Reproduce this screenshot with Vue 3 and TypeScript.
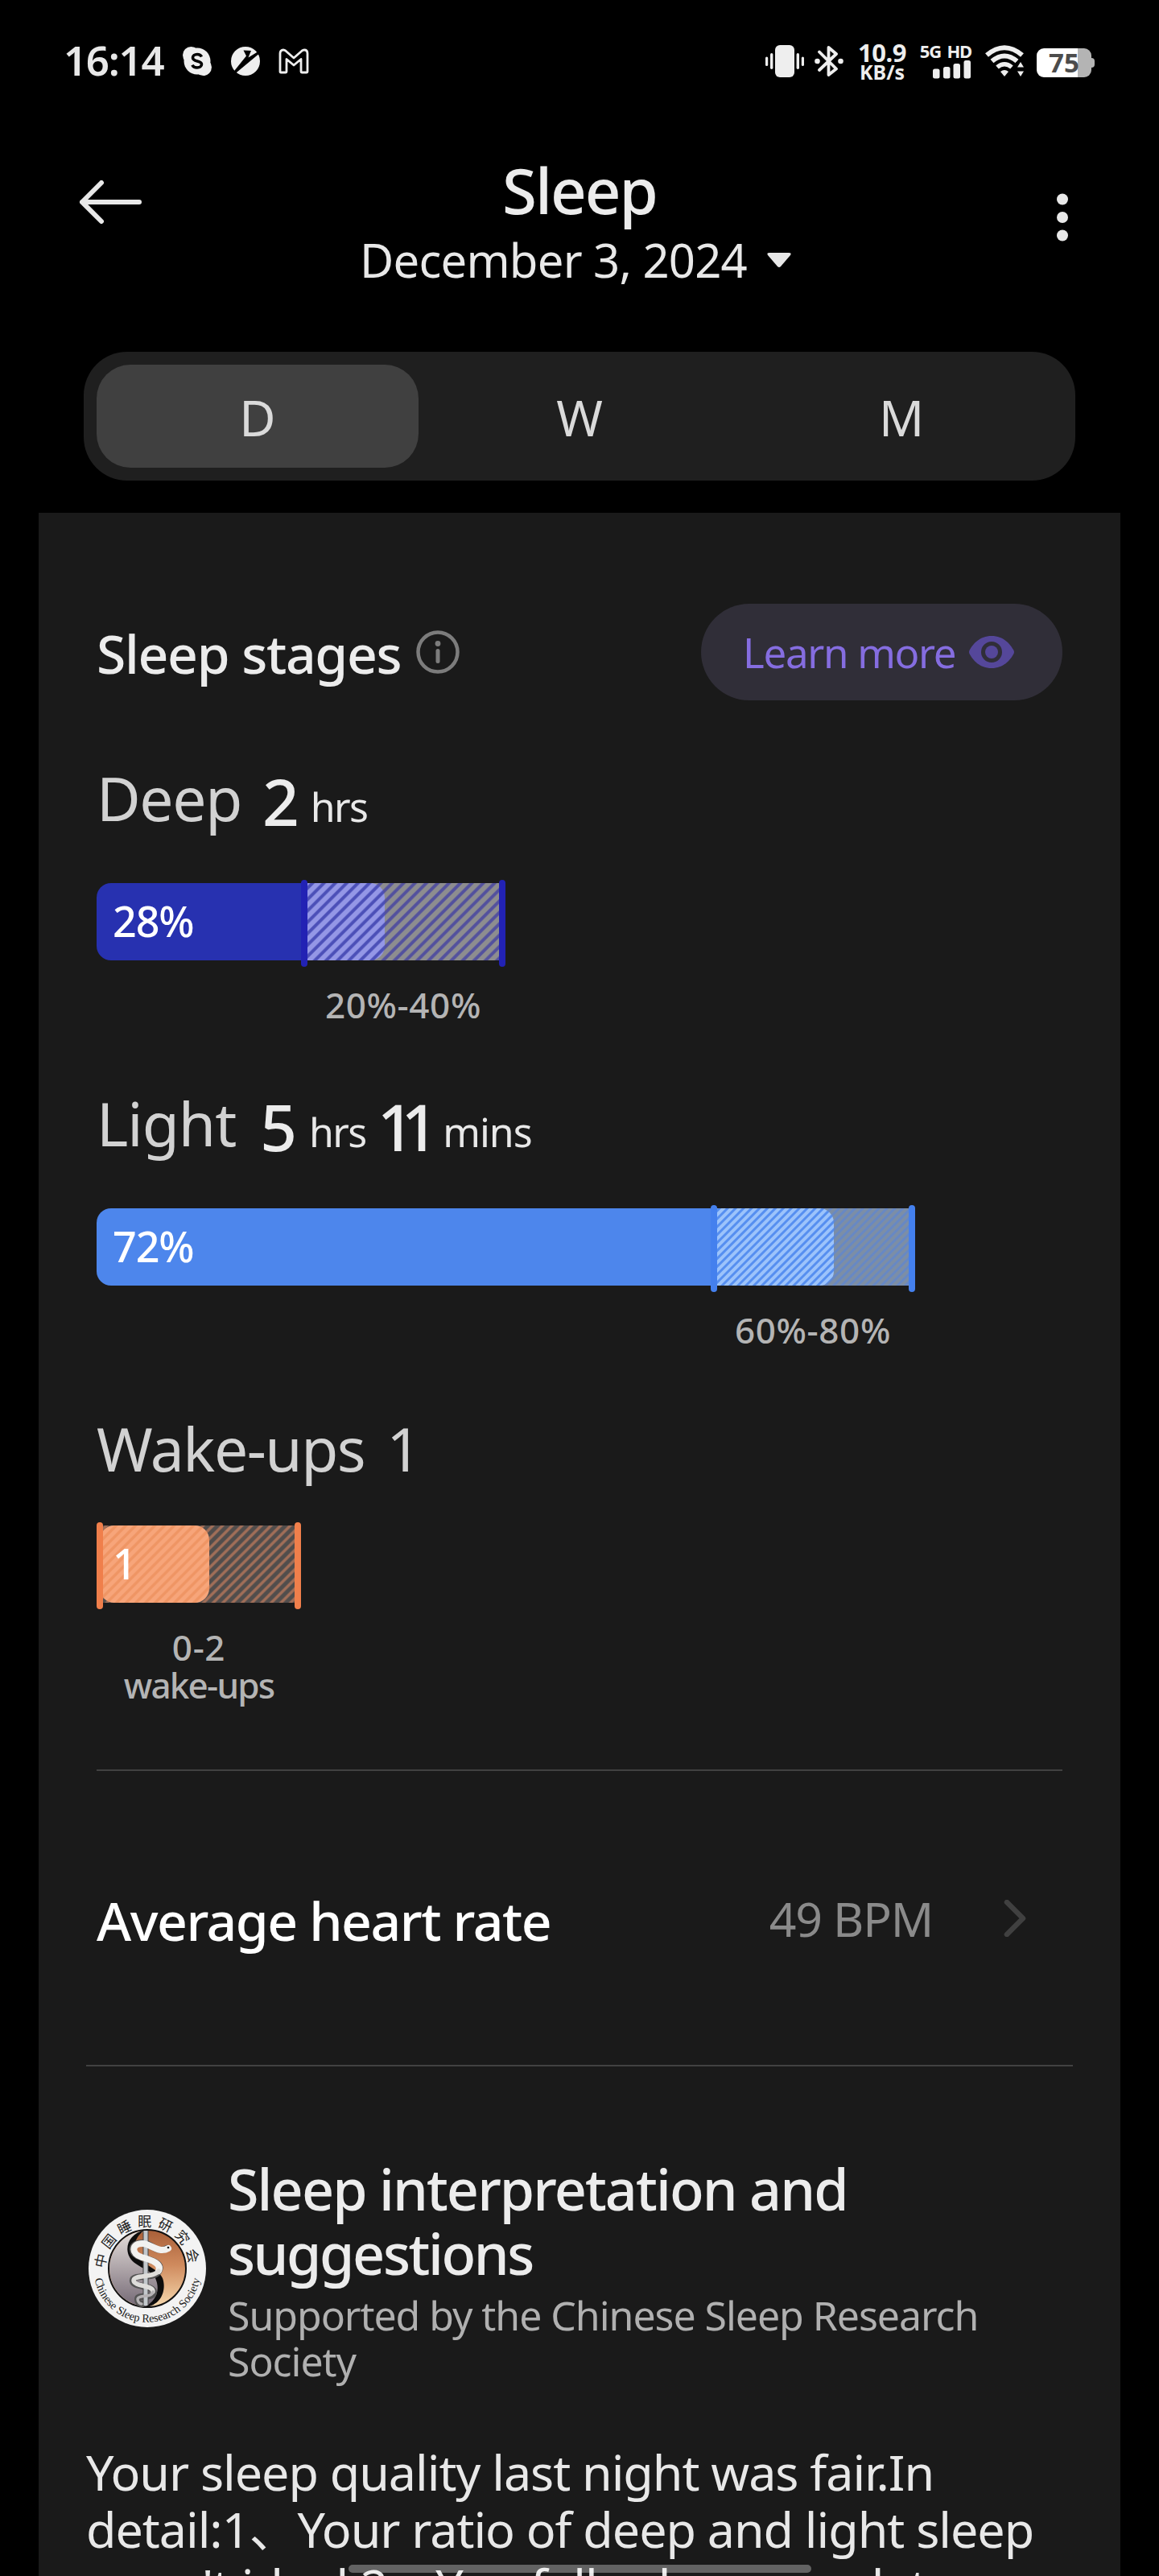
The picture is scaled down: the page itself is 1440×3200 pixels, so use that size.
<script setup lang="ts">
interface Part {
  text: string
  kind: 'value' | 'unit'
  gap: number
  tracking?: number
}
interface Stage {
  key: string
  name: string
  parts: Part[]
  barLabel: string
  fillStart: number
  fillEnd: number
  from: number
  to: number
  range: string[]
}

const stages: Stage[] = [
  {
    key: 'deep',
    name: 'Deep',
    parts: [
      { text: '2', kind: 'value', gap: 26 },
      { text: 'hrs', kind: 'unit', gap: 14 },
    ],
    barLabel: '28%',
    fillStart: 0,
    fillEnd: 358,
    from: 254,
    to: 500,
    range: ['20%-40%'],
  },
  {
    key: 'light',
    name: 'Light',
    parts: [
      { text: '5', kind: 'value', gap: 30 },
      { text: 'hrs', kind: 'unit', gap: 15 },
      { text: '11', kind: 'value', gap: 14, tracking: -16 },
      { text: 'mins', kind: 'unit', gap: 22, tracking: -1 },
    ],
    barLabel: '72%',
    fillStart: 0,
    fillEnd: 916,
    from: 763,
    to: 1009,
    range: ['60%-80%'],
  },
  {
    key: 'wake',
    name: 'Wake-ups 1',
    parts: [],
    barLabel: '1',
    fillStart: 4,
    fillEnd: 140,
    from: 0,
    to: 246,
    range: ['0-2', 'wake-ups'],
  },
]

const tabs: string[] = ['D', 'W', 'M']
</script>

<template>
  <div class="screen">
    <div class="status">
      <span class="time">16:14</span>
      <svg class="i-skype" width="38" height="38" viewBox="0 0 38 38">
        <circle cx="19" cy="19" r="16.500" fill="#eee" />
        <circle cx="11.500" cy="11.500" r="10.500" fill="#eee" />
        <circle cx="26.500" cy="26.500" r="10.500" fill="#eee" />
        <path d="M24.500 13.500c-1-2-3-3-5.500-3-3.300 0-5.500 1.700-5.500 4.200 0 5.600 11 2.800 11 8 0 2.700-2.400 4.300-5.600 4.300-3 0-5-1.200-6-3.300" fill="none" stroke="#000" stroke-width="3.600" />
      </svg>
      <svg class="i-round" width="38" height="38" viewBox="0 0 38 38">
        <circle cx="19" cy="19" r="18" fill="#eee" />
        <path d="M16.500 5.500L26 6l-3.500 8.500L38 5v3L5.500 35 3.500 33 20 12.500z" fill="#000" />
      </svg>
      <svg class="i-mail" width="38" height="32" viewBox="0 0 38 32">
        <path d="M2 6.500Q2 2 6 2q1.500 0 3 1.200L19 12 29 3.200Q30.500 2 32 2q4 0 4 4.500V29q0 1-1 1h-6q-1 0-1-1V13.500L19 21l-9-7.500V29q0 1-1 1H3q-1 0-1-1z" fill="none" stroke="#eee" stroke-width="2.800" stroke-linejoin="round" />
      </svg>
      <span class="grow"></span>
      <svg class="i-vib" width="48" height="40" viewBox="0 0 48 40">
        <g fill="#eee">
          <rect x="12" y="0" width="24" height="40" rx="6" />
          <rect x="6" y="10" width="3.400" height="20" rx="1.700" />
          <rect x="0" y="14.500" width="3.200" height="11.500" rx="1.600" />
          <rect x="38.600" y="10" width="3.400" height="20" rx="1.700" />
          <rect x="44.800" y="14.500" width="3.200" height="11.500" rx="1.600" />
        </g>
      </svg>
      <svg class="i-bt" width="36" height="40" viewBox="0 0 36 40">
        <path d="M6 8.500L27 29.500 17.500 37V3L27 11 6 31" fill="none" stroke="#eee" stroke-width="3.800" stroke-linejoin="round" stroke-linecap="round" />
        <circle cx="3.500" cy="20" r="3.300" fill="#eee" />
        <circle cx="32.500" cy="20" r="3.300" fill="#eee" />
      </svg>
      <div class="net">
        <span class="net-n">10.9</span>
        <span class="net-u">KB/s</span>
      </div>
      <div class="cell">
        <span class="cell-t">5G HD</span>
        <svg width="48" height="23" viewBox="0 0 48 23">
          <g fill="#eee">
            <rect x="0" y="10.500" width="8.500" height="12" rx="2.500" />
            <rect x="13" y="8" width="8.500" height="14.500" rx="2.500" />
            <rect x="25.500" y="4" width="8.500" height="18.500" rx="2.500" />
            <rect x="38.500" y="0" width="8.500" height="22.500" rx="2.500" />
          </g>
        </svg>
      </div>
      <svg class="i-wifi" width="50" height="40" viewBox="0 0 50 40">
        <g fill="none" stroke="#eee" stroke-width="6">
          <path d="M2 12.500Q24 -6 46 12.500" />
          <path d="M8.500 20Q24 7 39.500 20" />
          <path d="M15 27.500Q24 20 33 27.500" stroke-width="5.500" />
        </g>
        <path d="M19 33q5-4 10 0l-5 6z" fill="#eee" />
        <path d="M38 21h12v19H38z" fill="#000" />
        <path d="M40 27.500l4-6.500 4 6.500zM40 32.500l4 6.500 4-6.500z" fill="#eee" />
      </svg>
      <div class="battery">
        <div class="batt-body"><span>75</span></div>
        <div class="batt-nub"></div>
      </div>
    </div>

    <header class="header">
      <svg class="back" width="79" height="54" viewBox="0 0 79 54">
        <path d="M28 3L4 27l24 24M4 27h71" fill="none" stroke="#e8e8e8" stroke-width="6" stroke-linecap="round" stroke-linejoin="round" />
      </svg>
      <div class="heading">
        <h1>Sleep</h1>
        <div class="date">
          <span>December 3, 2024</span>
          <svg width="32" height="20" viewBox="0 0 32 20">
            <path d="M4 1h24q4 0 2 3L18 18q-2 2-4 0L2 4Q0 1 4 1z" fill="#e8e8e8" />
          </svg>
        </div>
      </div>
      <svg class="menu" width="16" height="60" viewBox="0 0 16 60">
        <g fill="#e8e8e8">
          <circle cx="8" cy="7.500" r="7" />
          <circle cx="8" cy="30" r="7" />
          <circle cx="8" cy="52.500" r="7" />
        </g>
      </svg>
    </header>

    <nav class="tabs">
      <div v-for="(t, i) in tabs" :key="t" class="tab" :class="{ on: i === 0 }">{{ t }}</div>
    </nav>

    <main class="card">
      <div class="stages-head">
        <h2>Sleep stages</h2>
        <svg class="info" width="56" height="56" viewBox="0 0 56 56">
          <circle cx="28" cy="28" r="24.500" fill="none" stroke="#7c7c7c" stroke-width="4.500" />
          <circle cx="28" cy="17.500" r="3.400" fill="#7c7c7c" />
          <path d="M28 26.500v13" stroke="#7c7c7c" stroke-width="5" stroke-linecap="round" />
        </svg>
        <div class="pill">
          <span>Learn more</span>
          <svg width="56" height="42" viewBox="0 0 56 42">
            <path fill-rule="evenodd" d="M28 1C43 1 51 11 55 18q2 3 0 6C51 31 43 41 28 41S5 31 1 24q-2-3 0-6C5 11 13 1 28 1zM28 8a13 13 0 1 0 0 26 13 13 0 1 0 0-26z" fill="#55479a" />
            <circle cx="28" cy="21" r="8" fill="#55479a" />
          </svg>
        </div>
      </div>

      <section v-for="s in stages" :key="s.key" class="stage" :class="s.key">
        <div class="figures">
          <span class="name">{{ s.name }}</span>
          <span
            v-for="p in s.parts"
            :key="p.text"
            :class="p.kind"
            :style="{ marginLeft: p.gap + 'px', letterSpacing: p.tracking ? p.tracking + 'px' : undefined }"
          >{{ p.text }}</span>
        </div>
        <div class="bar">
          <div class="fill" :style="{ left: s.fillStart + 'px', width: s.fillEnd - s.fillStart + 'px' }"></div>
          <div class="hatch" :style="{ left: s.from + 4 + 'px', width: s.to - s.from + 'px' }">
            <div class="hatch-on" :style="{ clipPath: `inset(0 ${s.to + 4 - s.fillEnd}px 0 ${s.key === 'wake' ? '0' : '-40px'} round 18px)` }"></div>
          </div>
          <div class="mark" :style="{ left: s.from + 'px' }"></div>
          <div class="mark" :style="{ left: s.to + 'px' }"></div>
          <span class="bar-label">{{ s.barLabel }}</span>
        </div>
        <div class="range" :style="{ marginLeft: s.from + 'px' }">
          <div v-for="r in s.range" :key="r">{{ r }}</div>
        </div>
      </section>

      <div class="rule"></div>

      <div class="heart">
        <span class="heart-t">Average heart rate</span>
        <span class="heart-v">49 BPM</span>
        <svg width="28" height="46" viewBox="0 0 28 46">
          <path d="M4 3l20 20L4 43" fill="none" stroke="#404040" stroke-width="6.500" stroke-linecap="round" stroke-linejoin="round" />
        </svg>
      </div>

      <div class="rule wide"></div>

      <div class="interp">
        <svg class="badge" width="148" height="148" viewBox="-74 -74 148 148">
          <defs>
            <linearGradient id="warm" x1="0" y1="0" x2="0" y2="1">
              <stop offset="0" stop-color="#a85f38" />
              <stop offset=".45" stop-color="#cf8a5d" />
              <stop offset="1" stop-color="#f6d9ae" />
            </linearGradient>
            <linearGradient id="cool" x1="0" y1="0" x2="0" y2="1">
              <stop offset="0" stop-color="#e6dfdb" />
              <stop offset="1" stop-color="#756a76" />
            </linearGradient>
            <path id="arc-top" d="M-44.200 27.600A52.100 52.100 0 1 1 44.200 27.600" />
            <path id="arc-bottom" d="M-65.600 -12A66.700 66.700 0 1 0 65.600 -12" />
          </defs>
          <circle r="73" fill="#f3f3f3" />
          <circle r="48" fill="url(#warm)" stroke="#111" stroke-width="2" />
          <path d="M0-47A47 47 0 0 0 0 47C14 40 20 28 12 12 6 2-20-4-22-24-22-36-12-44 0-47z" fill="url(#cool)" />
          <path d="M-2-48C-22-44-28-28-23-16-17-2 2-1 10 12 17 28 10 40-3 48 18 46 24 26 19 12 13-2-14-6-16-24-16-36-10-44-2-48z" fill="#0d0d0d" />
          <g fill="none" stroke-linecap="round">
            <path d="M24-25C10-18 6-32-6-32-22-32-22-18-8-14 8-10 20-6 14 4 8 14-20 6-18 16-16 24 8 20 8 30 6 38-12 32-12 38-12 43-8 44-6 44" stroke="#555" stroke-width="8" />
            <path d="M-2-47V46" stroke="#444" stroke-width="7" stroke-linecap="butt" />
            <path d="M-2-47V46" stroke="#c3c8cc" stroke-width="5" stroke-linecap="butt" />
            <path d="M26-25C14-18 4-31-6-31-20-31-20-18-7-14 8-10 18-5 14 3" stroke="#f2f2f0" stroke-width="8" />
            <path d="M14 3C9 12-17 7-17 15-16 23 8 20 7 29" stroke="#deddda" stroke-width="5.500" />
            <path d="M7 29C6 37-11 32-12 38-12 42-9 44-7 44" stroke="#b5b2b4" stroke-width="3.500" />
          </g>
          <circle cx="26" cy="-26" r="1.300" fill="#111" />
          <text class="cn"><textPath href="#arc-top" startOffset="50%" text-anchor="middle">中国睡眠研究会</textPath></text>
          <text class="en"><textPath href="#arc-bottom" startOffset="50%" text-anchor="middle">Chinese Sleep Research Society</textPath></text>
        </svg>
        <div class="interp-text">
          <h2>Sleep interpretation and<br /><span class="tight">suggestions</span></h2>
          <p>Supported by the Chinese Sleep Research<br />Society</p>
        </div>
      </div>

      <p class="body">Your sleep quality last night was fair.In<br />detail:1、Your ratio of deep and light sleep<br />wasn't ideal.2、You fell asleep very late</p>
    </main>
    <div class="home"></div>
  </div>
</template>

<style>
body {
  background: #000;
}
</style>

<style scoped>
.screen {
  position: relative;
  width: 1440px;
  height: 3200px;
  overflow: hidden;
  background: #000;
  color: #e8e8e8;
  font-family: "Noto Sans", "Noto Sans CJK SC", sans-serif;
  white-space: nowrap;
  display: flex;
  flex-direction: column;
}
h1, h2, p {
  margin: 0;
  font-weight: 400;
}
svg {
  display: block;
  flex: none;
}
.status {
  height: 152px;
  flex: none;
  display: flex;
  align-items: center;
  padding: 0 80px 0 79px;
}
.time {
  width: 147px;
  font-size: 51px;
  line-height: 60px;
  font-weight: 600;
  letter-spacing: -1.3px;
  margin-top: -4px;
}
.i-round { margin-left: 22px; }
.i-mail { margin-left: 22px; }
.grow { flex: 1; }
.i-bt { margin-left: 13px; }
.net {
  width: 64px;
  margin-left: 16px;
  display: flex;
  flex-direction: column;
  align-items: center;
  font-weight: 700;
  color: #eee;
}
.net-n { font-size: 31px; line-height: 26px; letter-spacing: -0.5px; }
.net-u { font-size: 25px; line-height: 24px; margin-top: -1px; }
.cell {
  width: 65px;
  margin: -3px 2px 0 14px;
  display: flex;
  flex-direction: column;
  align-items: flex-end;
  font-weight: 700;
  color: #eee;
}
.cell-t { font-size: 22px; line-height: 24px; letter-spacing: -1.2px; word-spacing: 3px; }
.i-wifi { margin-left: 15px; }
.battery {
  display: flex;
  align-items: center;
  margin: 4px 0 0 14px;
}
.batt-body {
  width: 68px;
  height: 36px;
  border-radius: 9px;
  background: linear-gradient(90deg, #fff 51px, #b4b4b4 51px);
  color: #4c4c4c;
  font-size: 33px;
  line-height: 35px;
  font-weight: 700;
  text-align: center;
}
.batt-nub {
  width: 4px;
  height: 12px;
  border-radius: 0 4px 4px 0;
  background: #b4b4b4;
}
.header {
  height: 285px;
  flex: none;
  display: flex;
  align-items: flex-start;
}
.back { margin: 72px 0 0 98px; }
.heading {
  flex: 1;
  padding-top: 39px;
  display: flex;
  flex-direction: column;
  align-items: center;
}
h1 {
  font-size: 78px;
  line-height: 90px;
  letter-spacing: -2px;
  font-weight: 500;
  color: #ececec;
}
.date {
  display: flex;
  align-items: center;
  gap: 24px;
  margin-top: 9px;
  padding-right: 9px;
}
.date span {
  font-size: 58px;
  line-height: 66px;
  letter-spacing: -0.8px;
}
.menu { margin: 88px 112px 0 49px; }
.tabs {
  flex: none;
  margin: 0 104px;
  padding: 16px;
  height: 128px;
  border-radius: 54px;
  background: #1f1f1f;
  display: flex;
}
.tab {
  flex: 1;
  text-align: center;
  font-size: 62px;
  line-height: 131px;
  color: #dadada;
  border-radius: 42px;
}
.tab.on { background: #404040; }
.card {
  flex: 1;
  min-height: 0;
  margin: 40px 48px 0;
  padding: 0 72px;
  background: #1a1a1a;
  overflow: hidden;
}
.stages-head {
  margin-top: 113px;
  height: 120px;
  display: flex;
  align-items: center;
}
.stages-head h2 {
  font-size: 66px;
  line-height: 123px;
  font-weight: 500;
  letter-spacing: -1.3px;
  color: #ececec;
  padding-top: 2px;
}
.info { margin-left: 18px; }
.pill {
  margin-left: auto;
  width: 449px;
  height: 120px;
  box-sizing: border-box;
  border-radius: 60px;
  background: #302e38;
  padding: 0 60px 0 52px;
  display: flex;
  align-items: center;
  justify-content: space-between;
  color: #856de0;
  font-size: 51px;
  letter-spacing: -1.3px;
}
.stage { height: 404px; }
.stages-head + .stage { margin-top: 70px; }
.figures {
  height: 122px;
  display: flex;
  align-items: flex-start;
}
.name {
  font-size: 75px;
  line-height: 103px;
  color: #d2d2d2;
}
.value {
  font-size: 80px;
  line-height: 110px;
  font-weight: 500;
  color: #ececec;
}
.unit {
  font-size: 50px;
  line-height: 124px;
  letter-spacing: -1.6px;
}
.bar {
  position: relative;
  height: 96px;
  margin-top: 35px;
  width: 504px;
}
.deep .name { letter-spacing: -1.4px; }
.light .name { letter-spacing: -1px; }
.wake .name { letter-spacing: -1.5px; word-spacing: 9px; }
.wake .bar { margin-top: 25px; }
.fill {
  position: absolute;
  top: 0;
  height: 96px;
  border-radius: 18px;
  background: var(--c);
}
.hatch {
  position: absolute;
  top: 0;
  height: 96px;
  background: var(--off);
}
.hatch-on {
  height: 96px;
  background: var(--on);
}
.mark {
  position: absolute;
  top: -4px;
  width: 8px;
  height: 108px;
  border-radius: 4px;
  background: var(--m);
}
.deep {
  --c: #2731b0;
  --m: #2222b4;
  --off: repeating-linear-gradient(135deg, #8d8d8f 0 4.5px, #53519e 6px 8.5px, #8d8d8f 10px);
  --on: repeating-linear-gradient(135deg, #9497e6 0 4.5px, #4c50b8 6px 8.5px, #9497e6 10px);
}
.light {
  --c: #4d86ec;
  --m: #4480ee;
  --off: repeating-linear-gradient(135deg, #7c8ea6 0 3px, #6788c4 4px 6px, #7c8ea6 7px);
  --on: repeating-linear-gradient(135deg, #9cc3fb 0 3px, #568ff0 4px 6px, #9cc3fb 7px);
}
.wake {
  --c: #f49e70;
  --m: #f07f4b;
  --off: repeating-linear-gradient(135deg, #514d4c 0 3.5px, #a06e58 5px 7px, #514d4c 8.5px);
  --on: repeating-linear-gradient(135deg, #f7a57a 0 3.5px, #ef9564 5px 7px, #f7a57a 8.5px);
}
.bar-label {
  position: absolute;
  left: 20px;
  top: 0;
  line-height: 94px;
  font-size: 52px;
  font-weight: 500;
  letter-spacing: -1.1px;
  color: #fff;
}
.range {
  width: 254px;
  margin-top: 32px;
  text-align: center;
  font-size: 44px;
  line-height: 47px;
  font-weight: 500;
  letter-spacing: 0.6px;
  color: #b4b4b4;
}
.wake .range div:last-child { letter-spacing: -1.8px; }
.stage.wake { height: 450px; }
.rule {
  height: 2px;
  background: #414141;
}
.rule.wide { margin: 0 -13px; }
.heart {
  height: 365px;
  display: flex;
  align-items: center;
  padding-right: 45px;
}
.heart-t {
  font-size: 66px;
  font-weight: 500;
  letter-spacing: -1.5px;
  color: #fff;
  padding-top: 5px;
}
.heart-v {
  margin-left: auto;
  margin-right: 88px;
  font-size: 59px;
  letter-spacing: -1.2px;
  color: #8a8a8a;
  padding-top: 1px;
}
.interp {
  display: flex;
  align-items: flex-start;
  margin: 112px 0 0 -11px;
}
.badge { margin-top: 65px; }
.cn {
  font: 400 17px "Noto Sans CJK SC", sans-serif;
  letter-spacing: 6.4px;
  fill: #222;
}
.en {
  font: 14.2px "Liberation Serif", serif;
  fill: #1a1a1a;
}
.interp-text { margin-left: 26px; }
.interp-text h2 {
  font-size: 70px;
  line-height: 80px;
  letter-spacing: -1.9px;
  font-weight: 500;
  color: #ececec;
}
.tight { letter-spacing: -2.4px; }
.interp-text p {
  margin-top: 9px;
  font-size: 50px;
  line-height: 57px;
  letter-spacing: -1.05px;
  color: #b0b0b0;
}
.body {
  margin: 73px 0 0 -13px;
  font-size: 61px;
  line-height: 71px;
  letter-spacing: -1.05px;
}
.home {
  position: absolute;
  left: 433px;
  top: 3186px;
  width: 575px;
  height: 10px;
  border-radius: 5px;
  background: rgba(255, 255, 255, 0.32);
}
</style>
